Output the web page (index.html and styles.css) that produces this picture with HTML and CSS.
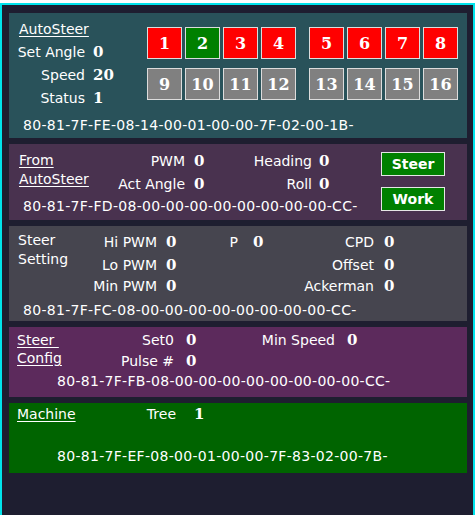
FILE: index.html
```html
<!DOCTYPE html>
<html>
<head>
<meta charset="utf-8">
<link rel="stylesheet" href="styles.css">
</head>
<body>
<div class="frame">
  <section class="panel p1">
    <div class="p1-top">
      <div class="p1-left">
        <div class="title u">AutoSteer</div>
        <div class="kv"><span class="lbl">Set Angle</span><span class="val">0</span></div>
        <div class="kv"><span class="lbl">Speed</span><span class="val">20</span></div>
        <div class="kv"><span class="lbl">Status</span><span class="val">1</span></div>
      </div>
      <div class="sq-grid">
        <div class="sq-row">
          <span class="sq red">1</span><span class="sq green">2</span><span class="sq red">3</span><span class="sq red">4</span>
          <span class="sq red grp">5</span><span class="sq red">6</span><span class="sq red">7</span><span class="sq red">8</span>
        </div>
        <div class="sq-row">
          <span class="sq gray">9</span><span class="sq gray">10</span><span class="sq gray">11</span><span class="sq gray">12</span>
          <span class="sq gray grp">13</span><span class="sq gray">14</span><span class="sq gray">15</span><span class="sq gray">16</span>
        </div>
      </div>
    </div>
    <div class="hex hex1">80-81-7F-FE-08-14-00-01-00-00-7F-02-00-1B-</div>
  </section>

  <section class="panel p2">
    <div class="p2-grid">
      <div class="title u t2">From<br>AutoSteer</div>
      <span class="lbl">PWM</span><span class="val pad9">0</span>
      <span class="lbl">Heading</span><span class="val pad7">0</span>
      <span class="lbl">Act Angle</span><span class="val pad9">0</span>
      <span class="lbl">Roll</span><span class="val pad7">0</span>
      <div class="hex hex2">80-81-7F-FD-08-00-00-00-00-00-00-00-00-CC-</div>
    </div>
    <div class="btn-col">
      <span class="gbtn">Steer</span>
      <span class="gbtn">Work</span>
    </div>
  </section>

  <section class="panel p3">
    <div class="title t3">Steer<br>Setting</div>
    <div class="p3-rows">
      <div class="p3-row r1">
        <span class="lbl c1">Hi PWM</span><span class="val c2">0</span>
        <span class="lbl c3">P</span><span class="val c4">0</span>
        <span class="lbl c5">CPD</span><span class="val c6">0</span>
      </div>
      <div class="p3-row r2">
        <span class="lbl c1">Lo PWM</span><span class="val c2">0</span>
        <span class="c3"></span><span class="c4"></span>
        <span class="lbl c5">Offset</span><span class="val c6">0</span>
      </div>
      <div class="p3-row r3">
        <span class="lbl c1">Min PWM</span><span class="val c2">0</span>
        <span class="c3"></span><span class="c4"></span>
        <span class="lbl c5">Ackerman</span><span class="val c6">0</span>
      </div>
      <div class="hex hex3">80-81-7F-FC-08-00-00-00-00-00-00-00-00-CC-</div>
    </div>
  </section>

  <section class="panel p4">
    <div class="title u t4">Steer&nbsp;<br>Config</div>
    <span class="lbl">Set0</span><span class="val">0</span>
    <span class="lbl">Min Speed</span><span class="val">0</span>
    <span class="lbl">Pulse #</span><span class="val">0</span>
    <span></span><span></span>
    <div class="hex hex4">80-81-7F-FB-08-00-00-00-00-00-00-00-00-CC-</div>
  </section>

  <section class="panel p5">
    <div class="title u t5">Machine</div>
    <span class="lbl">Tree</span><span class="val">1</span>
    <div class="hex hex5">80-81-7F-EF-08-00-01-00-00-7F-83-02-00-7B-</div>
  </section>
</div>
</body>
</html>
```
FILE: styles.css
```css
html, body {
  margin: 0;
  padding: 0;
  background: #ffffff;
}
body {
  font-family: "DejaVu Sans", sans-serif;
  font-size: 14px;
  color: #ffffff;
}
.frame {
  box-sizing: border-box;
  width: 475px;
  height: 520px;
  margin-top: 3px;
  border: 2px solid #00e4ec;
  border-bottom: none;
  background: #1e1e30;
  padding: 8px 6px 0 7px;
  display: flex;
  flex-direction: column;
  gap: 6px;
}
.panel {
  box-sizing: border-box;
  width: 458px;
}
.title { white-space: nowrap; }
.u { text-decoration: underline; text-underline-offset: 2px; }
.lbl { text-align: right; white-space: nowrap; }
.val {
  font-family: "DejaVu Serif", serif;
  font-weight: bold;
  font-size: 15px;
  white-space: nowrap;
}
.hex { white-space: nowrap; letter-spacing: 0.3px; }

/* Panel 1 */
.p1 {
  height: 125px;
  background: #29525a;
  padding-top: 5px;
}
.p1-top { display: flex; }
.p1-left { width: 138px; line-height: 23px; }
.p1-left .title { padding-left: 10px; }
.kv { display: flex; }
.kv .lbl { width: 76px; }
.kv .val { margin-left: 8px; }
.sq-grid {
  margin-top: 9px;
  display: flex;
  flex-direction: column;
  gap: 9px;
}
.sq-row { display: flex; gap: 3px; }
.sq {
  box-sizing: border-box;
  width: 35px;
  height: 32px;
  border: 1px solid #dcdcdc;
  display: flex;
  align-items: center;
  justify-content: center;
  font-family: "DejaVu Serif", serif;
  font-weight: bold;
  font-size: 16px;
  color: #ffffff;
}
.sq.grp { margin-left: 10px; }
.red { background: #ff0000; }
.green { background: #008000; }
.gray { background: #808080; }
.hex1 { margin-top: 4px; padding-left: 14px; line-height: 23px; }

/* Panel 2 */
.p2 {
  height: 76px;
  background: #49324f;
  padding-top: 6px;
  display: flex;
}
.p2-grid {
  display: grid;
  grid-template-columns: 91px 85px 40px 87px 62px;
  grid-template-rows: 23px 23px 20px;
  line-height: 23px;
}
.t2 {
  grid-row: 1 / 3;
  padding-left: 10px;
  padding-top: 1px;
  line-height: 19px;
}
.pad9 { padding-left: 9px; }
.pad7 { padding-left: 7px; }
.hex2 {
  grid-column: 1 / 6;
  padding-left: 14px;
  line-height: 20px;
}
.btn-col {
  padding-left: 7px;
  padding-top: 2px;
  display: flex;
  flex-direction: column;
  gap: 11px;
}
.gbtn {
  box-sizing: border-box;
  width: 64px;
  height: 24px;
  border: 1px solid #e6e6e6;
  background: #008000;
  display: flex;
  align-items: center;
  justify-content: center;
  font-weight: bold;
  font-size: 14px;
}

/* Panel 3 */
.p3 {
  height: 95px;
  background: #46454f;
  padding-top: 5px;
  display: flex;
}
.t3 {
  width: 81px;
  box-sizing: border-box;
  padding-left: 9px;
  line-height: 19px;
}
.p3-rows { display: flex; flex-direction: column; }
.p3-row { display: flex; }
.r1 { height: 23px; line-height: 23px; }
.r2 { height: 23px; line-height: 23px; }
.r3 { height: 19px; line-height: 19px; }
.c1 { width: 67px; }
.c2 { width: 44px; padding-left: 9px; }
.c3 { width: 28px; }
.c4 { width: 47px; padding-left: 15px; }
.c5 { width: 74px; }
.c6 { padding-left: 10px; }
.hex3 {
  margin-left: -67px;
  padding-top: 3px;
  line-height: 22px;
}

/* Panel 4 */
.p4 {
  height: 70px;
  background: #5c2a5c;
  padding-top: 3px;
  display: grid;
  grid-template-columns: 101px 64px 56px 105px auto;
  grid-template-rows: 21px 21px 19px;
  line-height: 21px;
}
.t4 {
  grid-row: 1 / 3;
  padding-left: 8px;
  padding-top: 1px;
  line-height: 18px;
}
.p4 .val { padding-left: 12px; }
.hex4 {
  grid-column: 1 / 6;
  padding-left: 48px;
  line-height: 19px;
}

/* Panel 5 */
.p5 {
  height: 70px;
  background: #006400;
  padding-top: 1px;
  display: grid;
  grid-template-columns: 101px 66px auto;
  grid-template-rows: 21px 21px;
  row-gap: 21px;
  line-height: 21px;
}
.t5 { padding-left: 8px; }
.p5 .val { padding-left: 18px; }
.hex5 {
  grid-column: 1 / 4;
  padding-left: 48px;
}
```
